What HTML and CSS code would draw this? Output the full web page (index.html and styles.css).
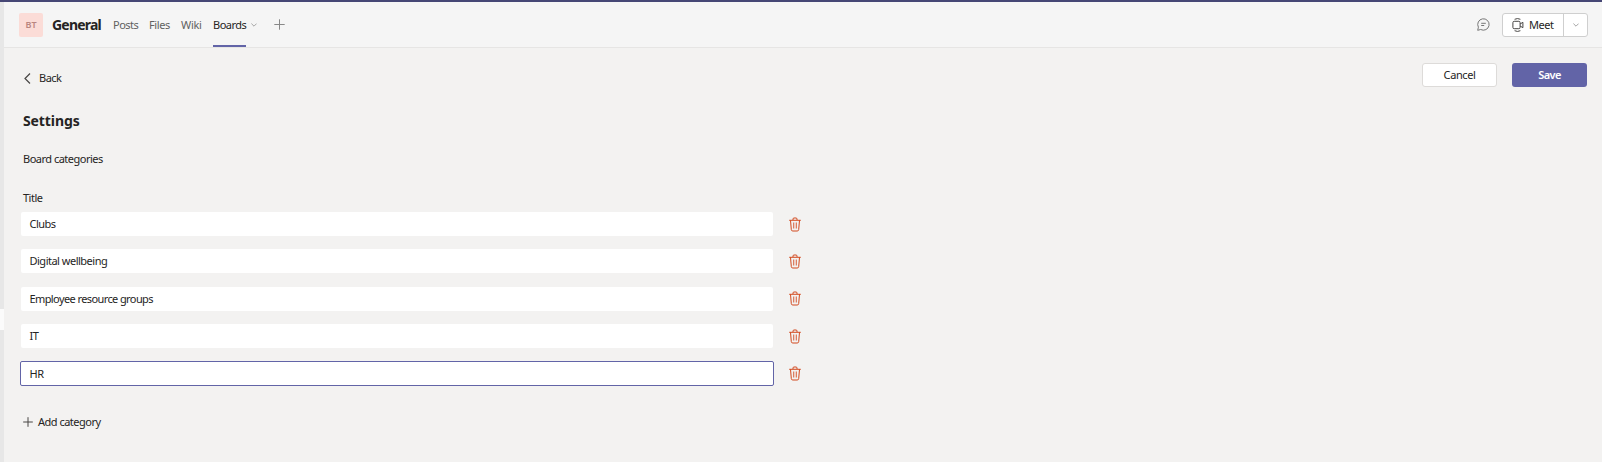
FILE: index.html
```html
<!DOCTYPE html>
<html lang="en">
<head>
<meta charset="utf-8">
<title>Boards settings</title>
<link rel="stylesheet" href="styles.css">
</head>
<body>
<svg class="defs" width="0" height="0">
  <symbol id="trash" viewBox="0 0 12 15">
    <path d="M.2 3.300h11.600M4 3V2Q4 1 5 1h2q1 0 1 1v1M1.500 3.300l.8 9.300Q2.400 14 3.800 14h4.400q1.400 0 1.500-1.400l.8-9.300"/>
    <path class="thin" d="M4.700 5.500v6M7.300 5.500v6"/>
  </symbol>
</svg>
<div class="app">
  <aside class="rail"><div class="marker"></div></aside>
  <div class="main">
    <header class="header">
      <div class="avatar"><span>BT</span></div>
      <h1 class="channel">General</h1>
      <nav class="tabs">
        <a class="tab posts">Posts</a>
        <a class="tab files">Files</a>
        <a class="tab wiki">Wiki</a>
        <a class="tab boards">Boards</a>
      </nav>
      <svg class="chev" width="6" height="4" viewBox="0 0 6 4"><path d="M.4.6 3 3.200 5.600.6"/></svg>
      <svg class="plus-tab" width="11" height="11" viewBox="0 0 11 11"><path d="M5.500.3v10.400M.3 5.500h10.400"/></svg>
      <svg class="chat" width="13" height="13" viewBox="0 0 13 13"><path d="M.7 12.300 1.400 9.200A5.700 5.700 0 1 1 3.700 11.500ZM4.200 5.300h4.600M4.200 7.500h3"/></svg>
      <div class="meet">
        <div class="meet-main">
          <svg width="12" height="14" viewBox="0 0 12 14"><rect x=".9" y="3.300" width="7.200" height="7.400" rx="1.300"/><path d="m8.100 6 2.800-1.700v5.400L8.100 8M2.600 1.300Q5.500-.2 8.400 1.300M2.600 12.700q2.900 1.500 5.800 0"/></svg>
          <span>Meet</span>
        </div>
        <div class="meet-drop"><svg class="chev" width="6" height="4" viewBox="0 0 6 4"><path d="M.4.6 3 3.200 5.600.6"/></svg></div>
      </div>
    </header>
    <section class="content">
      <div class="toolbar">
        <a class="back"><svg width="7" height="11" viewBox="0 0 7 11"><path d="M6 .5 1 5.500l5 5"/></svg><span>Back</span></a>
        <div class="actions"><button class="cancel"><span>Cancel</span></button><button class="save"><span>Save</span></button></div>
      </div>
      <h2 class="settings"><span>Settings</span></h2>
      <div class="sub"><span>Board categories</span></div>
      <div class="label"><span>Title</span></div>
      <div class="rows">
        <div class="row"><div class="field"><span>Clubs</span></div><svg class="trash"><use href="#trash"/></svg></div>
        <div class="row"><div class="field"><span>Digital wellbeing</span></div><svg class="trash"><use href="#trash"/></svg></div>
        <div class="row"><div class="field"><span class="employee">Employee resource groups</span></div><svg class="trash"><use href="#trash"/></svg></div>
        <div class="row"><div class="field"><span>IT</span></div><svg class="trash"><use href="#trash"/></svg></div>
        <div class="row"><div class="field focused"><span>HR</span></div><svg class="trash"><use href="#trash"/></svg></div>
      </div>
      <div class="add"><svg width="10" height="10" viewBox="0 0 10 10"><path d="M5 .2v9.600M.2 5h9.600"/></svg><span>Add category</span></div>
    </section>
  </div>
</div>
</body>
</html>
```
FILE: styles.css
```css
* { box-sizing: border-box; }
body { margin: 0; background: #f3f2f1; color: #252423; font: 11px/16px "Noto Sans", "Open Sans", sans-serif; letter-spacing: -0.5px; }
h1, h2 { margin: 0; }
svg { display: block; flex: none; fill: none; stroke: #484644; stroke-width: 1; }
span, a, h1 { white-space: nowrap; }
.defs { position: absolute; }
.app { display: flex; height: 462px; border-top: 2px solid #464775; overflow: hidden; }
.rail { width: 4px; flex: none; background: #e7e7e7; padding-top: 307px; }
.marker { height: 21px; background: #fbfbfb; }
.main { flex: 1; min-width: 0; }
.header { display: flex; align-items: center; height: 46px; padding: 0 14px 0 15px; background: #f5f5f5; border-bottom: 1px solid #e6e5e4; }
.avatar { display: grid; place-items: center; width: 24px; height: 24px; border-radius: 2px; background: #fbdcd7; color: #b98680; font-size: 9px; font-weight: 600; letter-spacing: 0; }
.channel { width: 61px; margin-left: 9px; font-size: 14px; line-height: 20px; font-weight: 700; letter-spacing: -0.8px; }
.tabs { display: flex; align-self: stretch; }
.tab { display: flex; align-items: center; color: #616161; }
.posts { width: 36px; }
.files { width: 32px; letter-spacing: -0.4px; }
.wiki { width: 32px; letter-spacing: -0.3px; }
.boards { width: 33px; color: #252423; position: relative; }
.boards::after { content: ""; position: absolute; left: 0; right: 0; bottom: 0; height: 2px; background: #6264a7; }
.chev { stroke: #a5a5a5; }
.header > .chev { margin-left: 5px; }
.plus-tab { margin-left: 17px; stroke: #888; }
.chat { margin-left: auto; stroke: #777; }
.meet { display: flex; width: 86px; height: 24px; margin-left: 12px; border: 1px solid #cfcfcf; border-radius: 3px; background: #fff; }
.meet-main { display: flex; align-items: center; gap: 5px; width: 61px; padding-left: 9px; border-right: 1px solid #cfcfcf; }
.meet-drop { flex: 1; display: grid; place-items: center; }
.content { padding: 15px 15px 0 16px; }
.toolbar { display: flex; justify-content: space-between; align-items: flex-start; height: 42px; }
.back { display: flex; align-items: center; gap: 8px; height: 30px; padding-left: 4px; }
.back svg { stroke-width: 1.2; }
.actions { display: flex; gap: 15px; }
button { width: 75px; height: 24px; padding: 0; font: 11px/16px "Noto Sans", "Open Sans", sans-serif; border-radius: 3px; }
.cancel { border: 1px solid #dddbd9; background: #fff; color: #252423; letter-spacing: -0.4px; }
.save { border: 0; background: #6264a7; color: #fff; font-weight: 600; letter-spacing: -0.6px; }
.settings { height: 30px; padding-left: 3px; font-size: 14px; line-height: 32px; letter-spacing: -0.1px; }
.sub { height: 39px; margin-top: 10px; padding-left: 3px; line-height: 28px; }
.label { height: 28px; padding-left: 3px; line-height: 28px; }
.rows { display: grid; grid-auto-rows: 24px; gap: 13.35px; }
.row { display: flex; align-items: center; padding-left: 1px; }
.field { width: 752px; height: 24px; padding-left: 8.5px; line-height: 24px; background: #fff; border-radius: 2px; }
.employee { letter-spacing: -0.6px; }
.focused { width: 754px; height: 25px; margin: 0 -1px; border: 1px solid #6264a7; line-height: 23px; }
.trash { width: 12px; height: 15px; margin-left: 16px; stroke: #d2491e; }
.thin { stroke-width: 1.1; opacity: .8; }
.add { display: flex; align-items: center; gap: 5px; margin-top: 29px; padding-left: 3px; height: 16px; }
```
